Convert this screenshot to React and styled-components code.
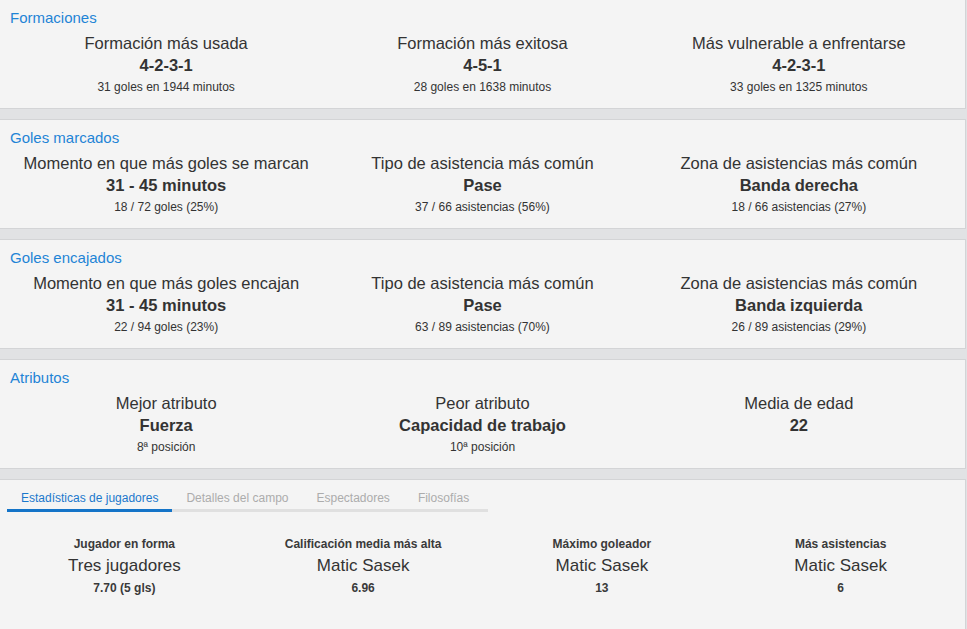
import React, { useState } from "react";
import styled, { createGlobalStyle } from "styled-components";

const GlobalStyle = createGlobalStyle`
	body {
		margin: 0;
		overflow: hidden;
		background: #f4f4f4;
		font-family: "Liberation Sans", Arial, sans-serif;
		color: #333;
	}
`;

const sections = [
	{
		title: "Formaciones",
		items: [
			{ label: "Formación más usada", value: "4-2-3-1", note: "31 goles en 1944 minutos" },
			{ label: "Formación más exitosa", value: "4-5-1", note: "28 goles en 1638 minutos" },
			{ label: "Más vulnerable a enfrentarse", value: "4-2-3-1", note: "33 goles en 1325 minutos" },
		],
	},
	{
		title: "Goles marcados",
		items: [
			{ label: "Momento en que más goles se marcan", value: "31 - 45 minutos", note: "18 / 72 goles (25%)" },
			{ label: "Tipo de asistencia más común", value: "Pase", note: "37 / 66 asistencias (56%)" },
			{ label: "Zona de asistencias más común", value: "Banda derecha", note: "18 / 66 asistencias (27%)" },
		],
	},
	{
		title: "Goles encajados",
		items: [
			{ label: "Momento en que más goles encajan", value: "31 - 45 minutos", note: "22 / 94 goles (23%)" },
			{ label: "Tipo de asistencia más común", value: "Pase", note: "63 / 89 asistencias (70%)" },
			{ label: "Zona de asistencias más común", value: "Banda izquierda", note: "26 / 89 asistencias (29%)" },
		],
	},
	{
		title: "Atributos",
		items: [
			{ label: "Mejor atributo", value: "Fuerza", note: "8ª posición" },
			{ label: "Peor atributo", value: "Capacidad de trabajo", note: "10ª posición" },
			{ label: "Media de edad", value: "22", note: "" },
		],
	},
];

const tabs = ["Estadísticas de jugadores", "Detalles del campo", "Espectadores", "Filosofías"];

const players = [
	{ label: "Jugador en forma", name: "Tres jugadores", note: "7.70 (5 gls)" },
	{ label: "Calificación media más alta", name: "Matic Sasek", note: "6.96" },
	{ label: "Máximo goleador", name: "Matic Sasek", note: "13" },
	{ label: "Más asistencias", name: "Matic Sasek", note: "6" },
];

function App() {
	const [activeTab, setActiveTab] = useState(0);

	return (
		<Page>
			<GlobalStyle />
			{sections.map((section) => (
				<Panel key={section.title}>
					<PanelTitle>{section.title}</PanelTitle>
					<StatRow>
						{section.items.map((item) => (
							<Stat key={item.label}>
								<StatLabel>{item.label}</StatLabel>
								<StatValue>{item.value}</StatValue>
								<StatNote>{item.note}</StatNote>
							</Stat>
						))}
					</StatRow>
				</Panel>
			))}

			<Panel $grow>
				<TabBar>
					{tabs.map((tab, i) => (
						<Tab key={tab} $active={i === activeTab} onClick={() => setActiveTab(i)}>
							{tab}
						</Tab>
					))}
				</TabBar>
				<PlayerRow>
					{players.map((p) => (
						<Player key={p.label}>
							<PlayerLabel>{p.label}</PlayerLabel>
							<PlayerName>{p.name}</PlayerName>
							<PlayerNote>{p.note}</PlayerNote>
						</Player>
					))}
				</PlayerRow>
			</Panel>
		</Page>
	);
}

const Page = styled.div`
	display: flex;
	flex-direction: column;
	gap: 10px;
	width: 967px;
	height: 650px;
	margin-top: -1px;
	background: #e1e2e4;
	overflow: hidden;
`;

const Panel = styled.section`
	box-sizing: border-box;
	width: 966px;
	height: ${(p) => (p.$grow ? "auto" : "110px")};
	flex: ${(p) => (p.$grow ? "1" : "none")};
	background: #f4f4f4;
	border-top: 1px solid #d3d4d6;
	border-bottom: 1px solid #d3d4d6;
	border-right: 1px solid #d3d4d6;
	padding: 8px 8px 0;
`;

const PanelTitle = styled.h3`
	margin: 0 0 4px 2px;
	font-size: 15px;
	font-weight: 400;
	line-height: 20px;
	color: #1f84d6;
`;

const StatRow = styled.div`
	display: grid;
	grid-template-columns: repeat(3, 1fr);
`;

const Stat = styled.div`
	display: flex;
	flex-direction: column;
	align-items: center;
	text-align: center;
`;

const StatLabel = styled.div`
	font-size: 16.5px;
	line-height: 22px;
	color: #333;
`;

const StatValue = styled.div`
	font-size: 16.5px;
	font-weight: 700;
	line-height: 22px;
	color: #333;
`;

const StatNote = styled.div`
	font-size: 12px;
	line-height: 18px;
	height: 18px;
	margin-top: 2px;
	color: #333;
`;

const TabBar = styled.div`
	display: flex;
	width: 481px;
	margin-left: -1px;
	border-bottom: 3px solid #e0e0e0;
`;

const Tab = styled.div`
	padding: 2px 14px 3px;
	font-size: 12px;
	line-height: 16px;
	color: ${(p) => (p.$active ? "#1b78cc" : "#acacac")};
	cursor: pointer;
	margin-bottom: -3px;
	border-bottom: 3px solid ${(p) => (p.$active ? "#1474c8" : "transparent")};
`;

const PlayerRow = styled.div`
	display: grid;
	grid-template-columns: repeat(4, 1fr);
	margin: 25px -3px 0;
`;

const Player = styled.div`
	display: flex;
	flex-direction: column;
	align-items: center;
	text-align: center;
`;

const PlayerLabel = styled.div`
	font-size: 12px;
	font-weight: 700;
	line-height: 14px;
	color: #3a3a3a;
`;

const PlayerName = styled.div`
	font-size: 17px;
	line-height: 22px;
	margin-top: 4px;
	color: #333;
`;

const PlayerNote = styled.div`
	font-size: 12px;
	font-weight: 700;
	line-height: 14px;
	margin-top: 4px;
	color: #3a3a3a;
`;

export default App;
